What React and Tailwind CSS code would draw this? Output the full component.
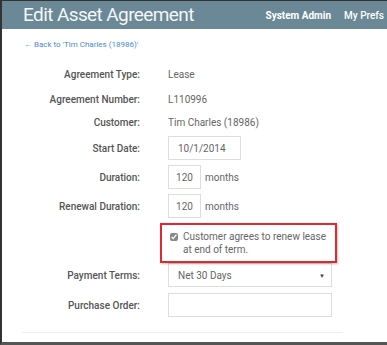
import React from "react";

const Label = ({ children }) => (
  <div className="w-[138px] shrink-0 text-right text-[10px] font-medium text-[#555]">{children}</div>
);

const Row = ({ label, children, className = "" }) => (
  <div className={`flex items-center ${className}`}>
    <Label>{label}</Label>
    <div className="ml-[28px] flex items-center text-[10px] text-[#666]">{children}</div>
  </div>
);

const Box = ({ className = "", children }) => (
  <div className={`flex h-[24px] items-center border border-[#ddd] bg-white px-[9px] text-[10px] text-[#666] ${className}`}>
    {children}
  </div>
);

export default function App() {
  return (
    <div className="h-[345px] w-[387px] overflow-hidden bg-white font-['Roboto',sans-serif]">
      <div className="flex h-full flex-col border-b-[3px] border-l-2 border-t border-b-[#555] border-l-[#333] border-t-[#333]">
        <div className="flex h-[28px] shrink-0 items-center bg-[#6a8896] pl-[21px]">
          <h1 className="text-[19px] font-normal tracking-[-0.6px] text-[#f4f6f7]">Edit Asset Agreement</h1>
          <div className="ml-auto flex items-center gap-[13px] pr-[3px] text-[10px] text-white">
            <span className="font-bold">System Admin</span>
            <span className="whitespace-nowrap font-medium">My Prefs</span>
          </div>
        </div>

        <a className="ml-[22px] mt-[10px] text-[8px] text-[#4a8ad0]">← Back to 'Tim Charles (18986)'</a>

        <div className="mt-[16px] flex flex-col">
          <Row label="Agreement Type:">Lease</Row>
          <Row label="Agreement Number:" className="mt-[10px]">L110996</Row>
          <Row label="Customer:" className="mt-[8px]">Tim Charles (18986)</Row>
          <Row label="Start Date:" className="mt-[6px]">
            <Box className="w-[73px]">10/1/2014</Box>
          </Row>
          <Row label="Duration:" className="mt-[5px]">
            <Box className="w-[33px] justify-center px-0">120</Box>
            <span className="ml-[4px]">months</span>
          </Row>
          <Row label="Renewal Duration:" className="mt-[5px]">
            <Box className="w-[33px] justify-center px-0">120</Box>
            <span className="ml-[4px]">months</span>
          </Row>
          <div className="relative z-10 ml-[158px] mt-[5px] flex h-[40px] w-[177px] items-start gap-[5px] border-2 border-[#e0292f] bg-white pl-[8px] pt-[5px] text-[10px] leading-[13px] text-[#666] shadow-[1px_1px_2px_rgba(0,0,0,0.25)]">
            <input type="checkbox" defaultChecked className="mt-[3px] h-[8px] w-[8px] shrink-0 accent-[#888]" />
            <span>Customer agrees to renew lease at end of term.</span>
          </div>
          <Row label="Payment Terms:">
            <Box className="h-[22px] w-[164px] justify-between pr-[6px]">
              <span>Net 30 Days</span>
              <span className="text-[6px] text-[#444]">▼</span>
            </Box>
          </Row>
          <Row label="Purchase Order:" className="mt-[6px]">
            <Box className="w-[164px]" />
          </Row>
        </div>

        <div className="ml-[20px] mr-[44px] mt-[15px] border-t border-[#eee]" />
      </div>
    </div>
  );
}
